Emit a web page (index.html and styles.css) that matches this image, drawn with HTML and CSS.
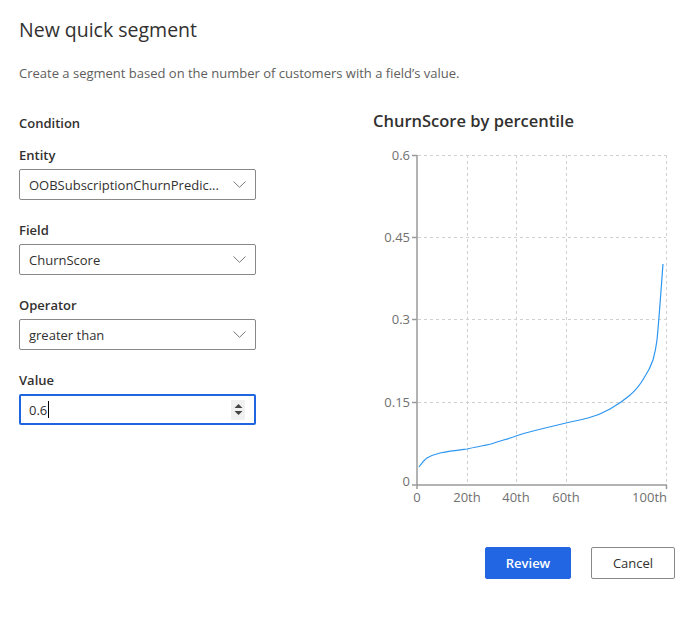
FILE: index.html
```html
<!DOCTYPE html>
<html>
<head>
<meta charset="utf-8">
<link rel="stylesheet" href="styles.css">
</head>
<body>
<div class="dialog">
  <h1 class="title">New quick segment</h1>
  <p class="desc">Create a segment based on the number of customers with a field’s value.</p>
  <div class="content">
    <div class="form">
      <div class="section">Condition</div>
      <div class="field">
        <label class="label">Entity</label>
        <div class="select"><span class="sel-text">OOBSubscriptionChurnPredic...</span><svg class="chev" width="13" height="7" viewBox="0 0 13 7"><path d="M0.5 0.5 L6.5 6.3 L12.5 0.5" fill="none" stroke="#7a7a7a" stroke-width="1"/></svg></div>
      </div>
      <div class="field">
        <label class="label">Field</label>
        <div class="select"><span class="sel-text">ChurnScore</span><svg class="chev" width="13" height="7" viewBox="0 0 13 7"><path d="M0.5 0.5 L6.5 6.3 L12.5 0.5" fill="none" stroke="#7a7a7a" stroke-width="1"/></svg></div>
      </div>
      <div class="field">
        <label class="label">Operator</label>
        <div class="select"><span class="sel-text">greater than</span><svg class="chev" width="13" height="7" viewBox="0 0 13 7"><path d="M0.5 0.5 L6.5 6.3 L12.5 0.5" fill="none" stroke="#7a7a7a" stroke-width="1"/></svg></div>
      </div>
      <div class="field">
        <label class="label">Value</label>
        <div class="number"><span class="num-text">0.6</span><span class="caret"></span><span class="spin"><svg width="9" height="13" viewBox="0 0 9 13"><path d="M0.5 5 L4.5 1 L8.5 5 Z" fill="#444"/><path d="M0.5 8 L4.5 12 L8.5 8 Z" fill="#444"/></svg></span></div>
      </div>
    </div>
    <div class="chart">
      <div class="chart-title">ChurnScore by percentile</div>
      <svg class="plot" width="320" height="370" viewBox="0 0 320 370">
        <g stroke="#d0d0d0" stroke-width="1" stroke-dasharray="3,3" fill="none">
          <line x1="53" y1="15.5" x2="301" y2="15.5"/>
          <line x1="53" y1="97.5" x2="301" y2="97.5"/>
          <line x1="53" y1="179.5" x2="301" y2="179.5"/>
          <line x1="53" y1="262.5" x2="301" y2="262.5"/>
          <line x1="102.5" y1="15" x2="102.5" y2="344"/>
          <line x1="151.5" y1="15" x2="151.5" y2="344"/>
          <line x1="201.5" y1="15" x2="201.5" y2="344"/>
          <line x1="301.5" y1="15" x2="301.5" y2="344"/>
        </g>
        <g stroke="#9a9a9a" stroke-width="1.5" fill="none">
          <line x1="52" y1="15" x2="52" y2="345"/>
          <line x1="47" y1="15.5" x2="52" y2="15.5"/>
          <line x1="47" y1="97.5" x2="52" y2="97.5"/>
          <line x1="47" y1="179.5" x2="52" y2="179.5"/>
          <line x1="47" y1="262.5" x2="52" y2="262.5"/>
          <line x1="47" y1="345" x2="302" y2="345"/>
          <line x1="52" y1="345" x2="52" y2="349"/>
          <line x1="301.5" y1="345" x2="301.5" y2="349"/>
        </g>
        <g class="ylab" text-anchor="end">
          <text x="45" y="20">0.6</text>
          <text x="45" y="102">0.45</text>
          <text x="45" y="184">0.3</text>
          <text x="45" y="267">0.15</text>
          <text x="45" y="346">0</text>
        </g>
        <g class="xlab" text-anchor="middle">
          <text x="52" y="362">0</text>
          <text x="102" y="362">20th</text>
          <text x="151" y="362">40th</text>
          <text x="201" y="362">60th</text>
          <text x="302" y="362" text-anchor="end">100th</text>
        </g>
        <path d="M54 327 C57 323 59 320 62 318 C67 315 71 314 75 313 C85 311 94 310 102 309 C110 307 118 306 126 304 C134 301 143 299 151 296 C159 293 168 291 176 289 C184 287 193 285 201 283 C209 281 216 280 223 278 C231 276 238 273 245 269 C252 265 258 261 264 256 C270 251 275 245 279 238 C283 232 286 226 288 220 C290 213 291 208 292 200 C294 180 296 150 298 124" fill="none" stroke="#2d96f0" stroke-width="1.2"/>
      </svg>
    </div>
  </div>
  <div class="actions">
    <button class="btn primary">Review</button>
    <button class="btn">Cancel</button>
  </div>
</div>
</body>
</html>
```
FILE: styles.css
```css
* { box-sizing: border-box; }
html, body { margin: 0; padding: 0; background: #fff; }
body {
  font-family: "Open Sans", "Noto Sans", sans-serif;
  color: #323130;
  width: 692px;
  height: 620px;
  overflow: hidden;
}
.dialog { padding: 16px 0 0 19px; }
.title {
  margin: 0;
  font-size: 19.5px;
  font-weight: 400;
  line-height: 28px;
  color: #323130;
}
.desc {
  margin: 19px 0 0;
  font-size: 13px;
  line-height: 20px;
  color: #605e5c;
}
.content { display: flex; align-items: flex-start; }
.form { width: 237px; }
.section {
  font-size: 13px;
  font-weight: 600;
  line-height: 20px;
  margin-top: 30px;
}
.field { margin-top: 12px; }
.field + .field { margin-top: 20px; }
.label {
  display: block;
  font-size: 13px;
  font-weight: 600;
  line-height: 20px;
  margin-bottom: 4px;
}
.select, .number {
  height: 31px;
  border: 1px solid #8a8886;
  border-radius: 2px;
  display: flex;
  align-items: center;
  padding: 0 9px 0 9px;
  font-size: 13px;
}
.sel-text { flex: 1; white-space: nowrap; overflow: hidden; }
.chev { flex: none; }
.number {
  border: 2px solid #1f65df;
  padding: 0 9px 0 8px;
}
.num-text { color: #323130; }
.caret { display: inline-block; width: 1px; height: 17px; background: #000; margin-left: 1px; }
.spin {
  margin-left: auto;
  width: 14px;
  height: 20px;
  background: #f0f0f0;
  display: flex;
  align-items: center;
  justify-content: center;
}
.chart { margin-left: 109px; }
.chart-title {
  font-size: 16.5px;
  font-weight: 600;
  line-height: 24px;
  margin-left: 8px;
  margin-top: 26px;
  color: #323130;
}
.plot { display: block; margin-top: 7px; }
.ylab text, .xlab text {
  font-family: "Open Sans", "Noto Sans", sans-serif;
  font-size: 13px;
  fill: #707070;
}
.actions {
  display: flex;
  justify-content: flex-end;
  gap: 20px;
  padding-right: 17px;
  margin-top: 37px;
}
.btn {
  height: 32px;
  border: 1px solid #8a8886;
  border-radius: 2px;
  background: #fff;
  color: #323130;
  font-family: "Open Sans", "Noto Sans", sans-serif;
  font-size: 13px;
  padding: 0;
  width: 84px;
}
.btn.primary {
  width: 86px;
  background: #2266e3;
  border-color: #2266e3;
  color: #fff;
  font-weight: 600;
}
```
